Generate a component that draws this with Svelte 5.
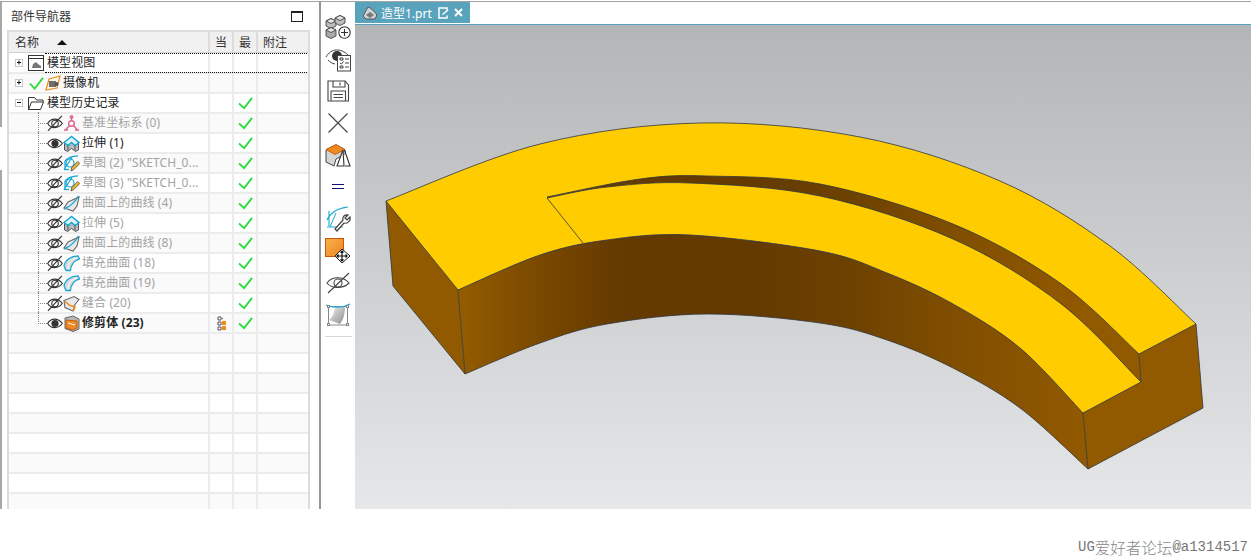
<script>
  // Part navigator on the left, view toolbar, and the graphics window with the model
  const rows = [
    { kind: 'view', label: '模型视图', expand: '+', selected: true },
    { kind: 'camera', label: '摄像机', expand: '+' },
    { kind: 'folder', label: '模型历史记录', expand: '-', check: true },
    { icon: 'datum', label: '基准坐标系 (0)', dim: true, check: true },
    { icon: 'extrude', label: '拉伸 (1)', check: true, shown: true },
    { icon: 'sketch', label: '草图 (2) "SKETCH_0...', dim: true, check: true },
    { icon: 'sketch', label: '草图 (3) "SKETCH_0...', dim: true, check: true },
    { icon: 'curve', label: '曲面上的曲线 (4)', dim: true, check: true },
    { icon: 'extrude', label: '拉伸 (5)', dim: true, check: true },
    { icon: 'curve', label: '曲面上的曲线 (8)', dim: true, check: true },
    { icon: 'fill', label: '填充曲面 (18)', dim: true, check: true },
    { icon: 'fill', label: '填充曲面 (19)', dim: true, check: true },
    { icon: 'sew', label: '缝合 (20)', dim: true, check: true },
    { icon: 'trim', label: '修剪体 (23)', bold: true, check: true, shown: true, last: true, tree: true }
  ];
  const blanks = Array.from({ length: 9 });

  // catmull-rom through the sampled points, returned as cubic segments
  function curve(pts) {
    let d = '';
    for (let i = 0; i < pts.length - 1; i++) {
      const a = pts[i - 1] || pts[i];
      const b = pts[i];
      const c = pts[i + 1];
      const e = pts[i + 2] || c;
      const c1 = [b[0] + (c[0] - a[0]) / 6, b[1] + (c[1] - a[1]) / 6];
      const c2 = [c[0] - (e[0] - b[0]) / 6, c[1] - (e[1] - b[1]) / 6];
      d += ` C${c1[0]} ${c1[1]} ${c2[0]} ${c2[1]} ${c[0]} ${c[1]}`;
    }
    return d;
  }
  const start = (p) => `M${p[0]} ${p[1]}`;
  const to = (p) => ` L${p[0]} ${p[1]}`;
  const back = (pts) => [...pts].reverse();

  const outer = [[386, 200], [540, 143], [700, 122], [860, 136], [1000, 180], [1110, 245], [1196, 323]];
  const stepHigh = [[547, 196], [640, 178], [707, 175], [820, 183], [953, 223], [1060, 282], [1139, 353]];
  const stepLow = [[547, 197], [607, 186], [690, 182], [820, 195], [953, 238], [1060, 302], [1141, 381]];
  const front = [[458, 289], [540, 254], [607, 239], [690, 234], [820, 250], [887, 272], [953, 303], [1020, 347], [1083, 412]];
  const lower = [[465, 373], [540, 342], [607, 323], [707, 313], [820, 322], [887, 339], [953, 367], [1020, 407], [1088, 468]];

  const topFace = start(outer[0]) + curve(outer) + to([1139, 353]) + to([1141, 381]) + to([1083, 412]) + curve(back(front)) + ' Z';
  const groove = start(stepHigh[0]) + curve(stepHigh) + to([1141, 381]) + curve(back(stepLow)) + ' Z';
  const frontFace = start(front[0]) + curve(front) + to([1088, 468]) + curve(back(lower)) + ' Z';
  const edges = [
    start(outer[0]) + curve(outer),
    start(stepHigh[0]) + curve(stepHigh),
    start(stepLow[0]) + curve(stepLow),
    start(front[0]) + curve(front),
    start(lower[0]) + curve(lower),
    'M386 200 L458 289 L465 373 L393 285 Z',
    'M583 242 L547 197',
    'M1196 323 L1139 353 L1141 381 L1083 412 L1088 468 L1203 407 Z'
  ];
</script>

{#snippet check()}
  <svg class="check" viewBox="0 0 16 14"><path d="M1 7l5.500 5L15 1" /></svg>
{/snippet}

{#snippet expander(open)}
  <svg class="expander" viewBox="0 0 8 8">
    <rect x=".5" y=".5" width="7" height="7" fill="#fff" stroke="#c8c8c8" />
    <path d={open ? 'M2 4h4' : 'M2 4h4M4 2v4'} stroke="#111" transform="translate(0 -.5)" />
  </svg>
{/snippet}

{#snippet eye(shown)}
  <svg class="eye" viewBox="0 0 16 16">
    <path d="M.7 8.500C4 2.700 11 2.700 15.300 8.500C11 14 4 14 .7 8.500Z" fill="none" stroke="#333" stroke-width="1.150" />
    {#if shown}
      <circle cx="8" cy="8.500" r="3.600" fill="#333" />
    {:else}
      <circle cx="8" cy="8.500" r="3.300" fill="none" stroke="#333" stroke-width="1.100" />
      <path d="M1 15.800L14.800 .8" stroke="#333" stroke-width="1.200" />
    {/if}
  </svg>
{/snippet}

{#snippet feature(name)}
  <svg class="feature" viewBox="0 0 17 17">
    {#if name === 'datum'}
      <g fill="none" stroke="#e0648c" stroke-width="1.400">
        <path d="M8.500 2v4M6.500 10.500L2.500 15M10.500 10.500l4 4.500M1 15h4M12 15h4" />
        <circle cx="8.500" cy="8.500" r="2.800" />
        <circle cx="8.500" cy="2" r="1.200" />
      </g>
    {:else if name === 'extrude'}
      <path d="M1.500 7l7-4.500L15.500 7v8l-3 1.500-4-3-4 3-3-1.500Z" fill="#b9bcbf" stroke="#555" />
      <path d="M1 7.500L8.500 1.500l7.500 6-4 3-3.500-3-3.500 3Z" fill="#dff3f9" stroke="#19a7d2" stroke-width="1.500" />
      <path d="M5 10.500v5M12 10.500v5" stroke="#555" />
    {:else if name === 'sketch'}
      <path d="M2 14V6M1 14.500L9 2.500M2 6C5 2 10 1 15 .8" fill="none" stroke="#19a7d2" stroke-width="1.300" />
      <path d="M1 14.500h5" stroke="#19a7d2" stroke-width="1.300" />
      <circle cx="7" cy="8" r="4" fill="none" stroke="#19a7d2" stroke-width="1.200" />
      <path d="M8 16l.800-3.500 6-6 2 2-6 6Z" fill="#f2b72c" stroke="#444" stroke-width=".8" />
    {:else if name === 'curve'}
      <path d="M5 7l11-5-2 9-4 5-9-3Z" fill="#e4e6e8" stroke="#666" stroke-width="1.100" />
      <path d="M1 14C6 12 12 7 15.500 1" fill="none" stroke="#19a7d2" stroke-width="1.400" />
    {:else if name === 'fill'}
      <path d="M1 11C2 5 8 1 15 .8L16.500 4C12 5 8 9 7.500 15.500L3 15.500Z" fill="#d6dadd" stroke="#19a7d2" stroke-width="1.300" />
      <path d="M5 14C5 8 9 4 14 3" fill="none" stroke="#fff" />
    {:else if name === 'sew'}
      <path d="M1 5.500l10-4 5 3-4 5-2 6.500-8-3.500Z" fill="#e8e8e8" stroke="#666" stroke-width="1.100" />
      <path d="M1.500 6L7 10.500l5 1-1.500 4.500" fill="none" stroke="#ee8a22" stroke-width="1.500" />
    {:else}
      <path d="M2 3l8-2 6 3v10l-6 2.500-8-3Z" fill="#b7b7b7" stroke="#666" />
      <path d="M3 5l11 1v7l-4 2-7-2Z" fill="#ef8a22" stroke="#c65f10" />
      <path d="M5 8l7 2" stroke="#fff" />
    {/if}
  </svg>
{/snippet}

<div class="page">
  <main class="main">
    <section class="nav">
      <span class="nav-gap"></span>
      <header class="nav-title">
        <span>部件导航器</span>
        <span class="maximize"></span>
      </header>
      <div class="tree">
        <div class="row head">
          <div class="cell name"><span>名称</span><i class="sort"></i></div>
          <div class="cell mid">当</div>
          <div class="cell mid">最</div>
          <div class="cell note">附注</div>
        </div>
        {#each rows as r, i}
          <div class="row" class:alt={i % 2 === 1}>
            <div class="cell name" class:selected={r.selected}>
              {#if r.expand}
                {@render expander(r.expand === '-')}
                {#if r.kind === 'view'}
                  <svg class="root" viewBox="0 0 16 16">
                    <rect x=".5" y=".5" width="15" height="15" fill="#fff" stroke="#333" />
                    <path d="M.5 3.500h15" stroke="#333" />
                    <path d="M4 13l1-4 3-2 2 2 3 2v2Z" fill="#777" />
                  </svg>
                {:else if r.kind === 'camera'}
                  <svg class="ok-large" viewBox="0 0 16 14"><path d="M1 7l5 5.500L15 1" /></svg>
                  <svg class="root camera" viewBox="0 0 16 16">
                    <path d="M1 15L4 4l11-3-3 12Z" fill="#fff6e8" stroke="#ee8a22" stroke-width="1.200" />
                    <rect x="4" y="6" width="7" height="6" fill="#6f6f6f" />
                    <circle cx="11.500" cy="9" r="2" fill="#555" />
                  </svg>
                {:else}
                  <svg class="root" viewBox="0 0 16 16">
                    <path d="M.5 14.500V2.500h6l2 2.500h6.500v2M.5 14.500h12L15.500 7h-12Z" fill="#fff" stroke="#333" />
                  </svg>
                {/if}
              {:else}
                <span class="branch" class:end={r.last}></span>
                {@render eye(r.shown)}
                {@render feature(r.icon)}
              {/if}
              <span class="label" class:top-label={r.expand && r.kind !== 'camera'} class:dim={r.dim} class:bold={r.bold}>{r.label}</span>
            </div>
            <div class="cell mid">
              {#if r.tree}
                <svg class="dep" viewBox="0 0 9 15">
                  <path d="M1 1h3v3H1ZM1 6h3v3H1ZM1 11h3v3H1Z" fill="#fff" stroke="#555" />
                  <path d="M5 2.500h1M5 7.500h1M5 12.500h1" stroke="#555" />
                  <path d="M5 5h4v4H5ZM5 10h4v4H5Z" fill="#ee8a22" />
                </svg>
              {/if}
            </div>
            <div class="cell mid">{#if r.check}{@render check()}{/if}</div>
            <div class="cell note"></div>
          </div>
        {/each}
        {#each blanks as _, i}
          <div class="row" class:alt={i % 2 === 0}>
            <div class="cell name"></div>
            <div class="cell mid"></div>
            <div class="cell mid"></div>
            <div class="cell note"></div>
          </div>
        {/each}
      </div>
    </section>

    <aside class="tools">
      <button class="tool" aria-label="add">
        <svg width="28" height="26" viewBox="0 0 28 26">
          <g stroke="#444" stroke-width=".9">
            <path d="M2 7l5-2.500L12 7v5l-5 2.500L2 12Z" fill="#bdbdbd" />
            <path d="M2 7l5 2.500L12 7 7 4.500Z" fill="#e4e4e4" />
            <path d="M11 4l5-2.500L21 4v5l-5 2.500L11 9Z" fill="#bdbdbd" />
            <path d="M11 4l5 2.500L21 4l-5-2.500Z" fill="#e4e4e4" />
            <path d="M2 16l5-2.500L12 16v6l-5 2.500L2 22Z" fill="#a9a9a9" />
            <path d="M2 16l5 2.500L12 16l-5-2.500Z" fill="#e4e4e4" />
          </g>
          <circle cx="20.500" cy="18.500" r="5.700" fill="#fff" stroke="#333" stroke-width="1.100" />
          <path d="M20.500 15v7M17 18.500h7" stroke="#333" stroke-width="1.100" />
        </svg>
      </button>
      <button class="tool" aria-label="view">
        <svg width="26" height="26" viewBox="0 0 26 26">
          <path d="M1 11C6 2 16 2 23 9M3 14c2 2 4 3.500 7 4" fill="none" stroke="#444" />
          <circle cx="12" cy="10" r="5" fill="#333" />
          <rect x="12.500" y="9.500" width="13" height="15.500" fill="#fff" stroke="#444" />
          <path d="M15 12h3v2h-3ZM15 20h3v2h-3ZM20 13h4M20 17h4M20 21h4" fill="none" stroke="#444" />
          <path d="M15 17l1.500 1 2-2.500" fill="none" stroke="#444" />
        </svg>
      </button>
      <button class="tool" aria-label="save">
        <svg width="24" height="24" viewBox="0 0 24 24" fill="none" stroke="#444" stroke-width="1.100">
          <path d="M2 2h17l3.500 4v16H2Z" />
          <path d="M7 2v6h12V2M14 3.500v3" />
          <path d="M5 22V12h14.500v10M7.500 15.500h9.500M7.500 18.500h9.500" />
        </svg>
      </button>
      <button class="tool" aria-label="close">
        <svg width="22" height="22" viewBox="0 0 22 22"><path d="M1.500 1.500l19 19M20.500 1.500l-19 19" stroke="#444" stroke-width="1.100" /></svg>
      </button>
      <button class="tool" aria-label="section">
        <svg width="26" height="25" viewBox="0 0 26 25">
          <path d="M1 7l10-5 9 5v4l-9 5-2 7-8-4Z" fill="#d5d5d5" stroke="#444" />
          <path d="M1 6.500l10-5 9 5-10 5Z" fill="#ee8a22" stroke="#c65f10" />
          <path d="M12 23L18 7l1 16ZM19.500 7l5.500 16h-5" fill="#fff" stroke="#333" stroke-width="1.100" />
        </svg>
      </button>
      <button class="tool" aria-label="equal">
        <svg width="14" height="8" viewBox="0 0 14 8"><path d="M1 1.500h12M1 5.500h12" stroke="#12127a" stroke-width="1" /></svg>
      </button>
      <button class="tool" aria-label="sketch tool">
        <svg width="26" height="26" viewBox="0 0 26 26" fill="none">
          <path d="M2 14C6 5 13 2 23 1M4 20V5M2 21h16" stroke="#19a7d2" stroke-width="1.100" />
          <path d="M5 21L11 7" stroke="#19a7d2" />
          <path d="M12 25l-2-2 8-9c-1-3 2-6 5-5l-3 3 2 2 3-3c1 4-3 7-6 6Z" fill="#fff" stroke="#444" stroke-width="1.200" />
        </svg>
      </button>
      <button class="tool" aria-label="move">
        <svg width="26" height="26" viewBox="0 0 26 26">
          <defs><linearGradient id="ob" x1="0" y1="0" x2="1" y2="1"><stop offset="0" stop-color="#f8b24a" /><stop offset="1" stop-color="#ee8420" /></linearGradient></defs>
          <rect x=".5" y=".5" width="18" height="18" fill="url(#ob)" stroke="#c7560c" />
          <path d="M17 11l8 7-8 7-7-7Z" fill="#fff" stroke="#222" />
          <path d="M17 13v10M12 18h10M15.500 14.500L17 13l1.500 1.500M15.500 21.500L17 23l1.500-1.500M13.500 16.500L12 18l1.500 1.500M20.500 16.500L22 18l-1.500 1.500" fill="none" stroke="#111" stroke-width="1.200" />
        </svg>
      </button>
      <button class="tool" aria-label="hide">
        <svg width="24" height="22" viewBox="0 0 24 22" fill="none" stroke="#444" stroke-width="1.100">
          <path d="M1 11C6 4 17 4 23 11C17 17 6 17 1 11Z" />
          <circle cx="12" cy="11" r="4" />
          <path d="M2 21L23 1" />
        </svg>
      </button>
      <button class="tool" aria-label="surface">
        <svg width="26" height="24" viewBox="0 0 26 24">
          <defs><linearGradient id="sf" x1="0" y1="0" x2="1" y2="1"><stop offset="0" stop-color="#f2f2f2" /><stop offset="1" stop-color="#8c8c8c" /></linearGradient></defs>
          <rect x="3.500" y="3.500" width="19" height="18.500" fill="none" stroke="#888" />
          <path d="M10 5C14 5 18 4 20 3C20 10 19 16 15 21L4 17C8 14 9 9 10 5Z" fill="url(#sf)" />
          <path d="M1 2C8 5 18 5 25 1" fill="none" stroke="#19a7d2" stroke-width="1.300" />
          <g fill="#fff" stroke="#888"><rect x="2.500" y="2.500" width="2" height="2" /><rect x="21.500" y="2.500" width="2" height="2" /><rect x="2.500" y="20.500" width="2" height="2" /><rect x="21.500" y="20.500" width="2" height="2" /></g>
        </svg>
      </button>
      <hr class="tools-sep" />
    </aside>

    <section class="view">
      <div class="tabs">
        <div class="tab">
          <svg class="tab-icon" viewBox="0 0 16 14">
            <path d="M1 10L6 1c3 1 6 4 9 8l-2 4H4Z" fill="#cfd3d6" stroke="#555" />
            <path d="M4 9l4-3 4 3-4 3Z" fill="#777" />
          </svg>
          <span class="tab-name">造型1.prt</span>
          <svg class="tab-page" viewBox="0 0 11 12" fill="none" stroke="#fff" stroke-width="1.500">
            <path d="M9 3.500V1H1v10h8V8.500" />
            <path d="M4.500 7.500L10 3" />
          </svg>
          <svg class="tab-close" viewBox="0 0 9 9"><path d="M1 1l7 7M8 1L1 8" stroke="#fff" stroke-width="2" /></svg>
        </div>
      </div>
      <div class="canvas">
        <svg class="model" viewBox="355 24 896 485">
          <defs>
            <linearGradient id="wall" gradientUnits="userSpaceOnUse" x1="458" y1="0" x2="1083" y2="0">
              <stop offset="0" stop-color="#945c00" />
              <stop offset=".13" stop-color="#7a4900" />
              <stop offset=".26" stop-color="#643a00" />
              <stop offset=".48" stop-color="#643a00" />
              <stop offset=".64" stop-color="#6e4200" />
              <stop offset=".79" stop-color="#804e00" />
              <stop offset="1" stop-color="#915900" />
            </linearGradient>
          </defs>
          <path d={topFace} fill="#ffcc00" />
          <path d={groove} fill="url(#wall)" />
          <path d={frontFace} fill="url(#wall)" />
          <path d="M386 200L458 289L465 373L393 285Z" fill="#925a00" />
          <path d="M1139 353L1196 323L1203 407L1088 468L1083 412L1141 381Z" fill="#925a00" />
          {#each edges as d}
            <path {d} fill="none" stroke="#2f3640" stroke-width=".8" stroke-linejoin="round" />
          {/each}
        </svg>
      </div>
    </section>
  </main>
  <footer class="mark">UG<span class="mark-cjk">爱好者论坛</span>@a1314517</footer>
</div>

<style>
  :global(body) {
    background: #fff;
  }

  .page {
    width: 1251px;
    height: 558px;
    overflow: hidden;
    font-family: "Noto Sans", "Noto Sans CJK SC", sans-serif;
    font-size: 12px;
    color: #333;
  }

  .main {
    display: flex;
    height: 507px;
    margin-top: 1px;
    border-top: 1px solid #a3a3a3;
    overflow: hidden;
    box-sizing: content-box;
  }

  .nav {
    position: relative;
    flex: 0 0 321px;
    box-sizing: border-box;
    padding-left: 5px;
    border-left: 2px solid #a8a8a8;
    border-right: 2px solid #979797;
  }

  .nav-gap {
    position: absolute;
    left: -2px;
    top: 125px;
    width: 2px;
    height: 43px;
    background: #fff;
  }

  .nav-title {
    display: flex;
    align-items: center;
    justify-content: space-between;
    height: 28px;
    padding: 0 6px 0 4px;
    width: 292px;
  }

  .maximize {
    width: 10px;
    height: 8px;
    border: 1px solid #222;
    border-top-width: 2px;
  }

  .tree {
    width: 303px;
    box-sizing: border-box;
    border: 2px solid #dcdcdc;
    border-bottom: 0;
  }

  .row {
    display: grid;
    grid-template-columns: 201px 24px 24px 50px;
    grid-template-rows: 18px;
    height: 20px;
    box-sizing: border-box;
    border-bottom: 2px solid #ececec;
  }

  .row.alt {
    background: #fafafa;
  }

  .row.head {
    grid-template-rows: 20px;
    height: 21px;
    margin-bottom: 1px;
    background: #f0f0f0;
    border-bottom: 1px solid #d0d0d0;
  }

  .cell {
    display: flex;
    align-items: center;
    min-width: 0;
    box-sizing: border-box;
    white-space: nowrap;
  }

  .cell.name,
  .cell.mid {
    border-right: 2px solid #ececec;
  }

  .head .cell.name,
  .head .cell.mid {
    border-right-color: #dcdcdc;
  }

  .head .cell.name {
    padding-left: 6px;
  }

  .head .cell.note {
    padding-left: 5px;
  }

  .sort {
    width: 0;
    height: 0;
    margin-left: 18px;
    border: 5px solid transparent;
    border-top: 0;
    border-bottom: 5px solid #111;
  }

  .cell.mid {
    justify-content: center;
  }

  .cell.name {
    position: relative;
  }

  .selected::after {
    content: "";
    position: absolute;
    left: 36px;
    right: -99px;
    top: -1px;
    bottom: -1px;
    border-top: 1px dotted #111;
    border-bottom: 1px dotted #111;
  }

  .expander {
    flex: none;
    width: 8px;
    height: 8px;
    margin-left: 6px;
  }

  .root {
    flex: none;
    width: 16px;
    height: 16px;
    margin-left: 5px;
  }

  .camera {
    margin-left: 1px;
  }

  .ok-large {
    flex: none;
    width: 15px;
    height: 13px;
    margin-left: 6px;
  }

  .ok-large path,
  .check path {
    fill: none;
    stroke: #2fd93f;
    stroke-width: 2;
  }

  .label {
    margin-left: 2px;
    margin-bottom: 1px;
    line-height: 14px;
    letter-spacing: .1px;
    color: #222;
  }

  .label.top-label {
    margin-left: 3px;
  }

  .label.dim {
    color: #a3a3a3;
  }

  .label.bold {
    font-weight: 700;
    color: #222;
  }

  .branch {
    position: relative;
    flex: none;
    width: 9px;
    height: 0;
    margin-left: 29px;
    border-top: 1px dotted #888;
  }

  .branch::before {
    content: "";
    position: absolute;
    left: 0;
    top: -12px;
    height: 22px;
    border-left: 1px dotted #888;
  }

  .branch.end::before {
    height: 12px;
  }

  .eye {
    flex: none;
    width: 16px;
    height: 16px;
  }

  .feature {
    flex: none;
    width: 17px;
    height: 17px;
  }

  .dep {
    width: 9px;
    height: 15px;
  }

  .check {
    width: 15px;
    height: 13px;
  }

  .tools {
    flex: 0 0 34px;
    display: flex;
    flex-direction: column;
    align-items: center;
    padding-top: 9px;
  }

  .tool {
    display: flex;
    align-items: center;
    justify-content: center;
    flex: 0 0 32px;
    width: 34px;
    padding: 0;
    border: 0;
    background: none;
  }

  .tools-sep {
    width: 27px;
    margin: 5px 0 0;
    border: 0;
    border-top: 1px solid #d8d8d8;
  }

  .view {
    flex: 1;
    display: flex;
    flex-direction: column;
    min-width: 0;
  }

  .tabs {
    flex: 0 0 22px;
    border-bottom: 1px solid #5aa3bc;
    box-sizing: content-box;
    height: 21px;
  }

  .tab {
    display: flex;
    align-items: center;
    width: 115px;
    height: 21px;
    box-sizing: border-box;
    padding-left: 7px;
    background: #5aa3bc;
    color: #fff;
  }

  .tab-icon {
    width: 16px;
    height: 14px;
  }

  .tab-name {
    margin-left: 3px;
  }

  .tab-page {
    width: 11px;
    height: 12px;
    margin-left: 6px;
  }

  .tab-close {
    width: 9px;
    height: 9px;
    margin-left: 5px;
  }

  .canvas {
    flex: 1;
    min-height: 0;
    background: linear-gradient(#b4b5b7, #e6e7e9);
  }

  .model {
    display: block;
    width: 896px;
    height: 485px;
  }

  .mark {
    display: flex;
    align-items: center;
    justify-content: flex-end;
    height: 49px;
    padding: 26px 3px 0 0;
    box-sizing: border-box;
    font-family: "Liberation Mono", "Noto Sans CJK SC", monospace;
    font-size: 14px;
    color: #777;
  }

  .mark-cjk {
    font-family: "Noto Sans CJK SC", sans-serif;
    font-size: 15.500px;
    font-weight: 300;
    color: #888;
  }
</style>
